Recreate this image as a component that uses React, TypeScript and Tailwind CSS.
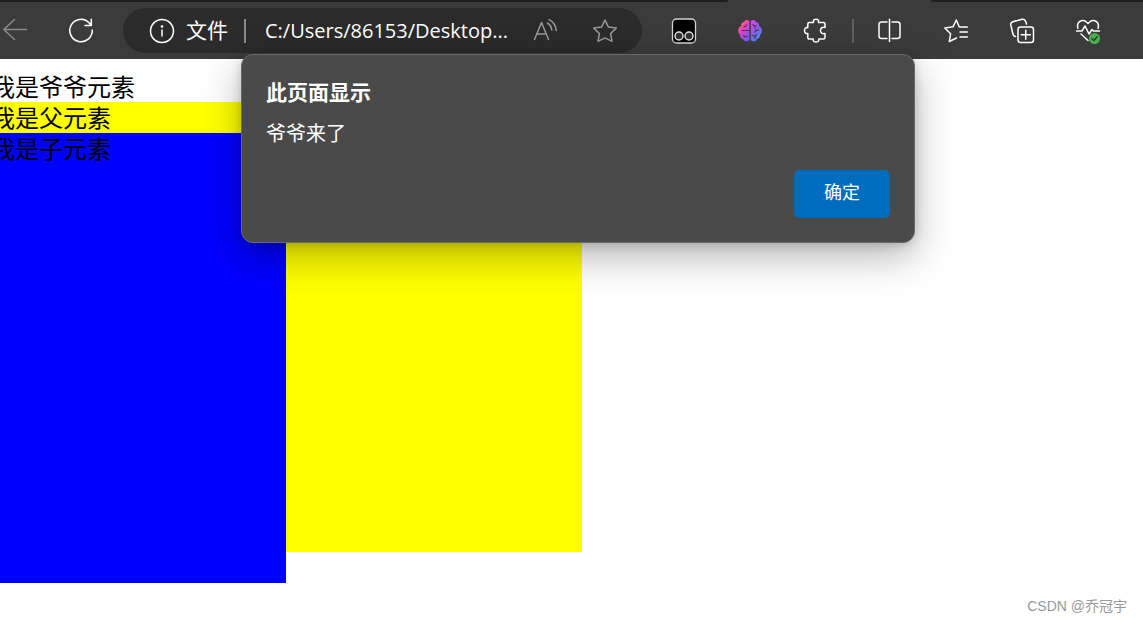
import type { ReactNode } from 'react'

function Icon({ children, className = 'text-white' }: { children: ReactNode; className?: string }) {
  return (
    <svg
      viewBox="0 0 24 24"
      className={`block w-6 h-6 overflow-visible ${className}`}
      fill="none"
      stroke="currentColor"
      strokeWidth="1.5"
      strokeLinecap="round"
      strokeLinejoin="round"
      aria-hidden="true"
    >
      {children}
    </svg>
  )
}

function ToolButton({ label, children }: { label: string; children: ReactNode }) {
  return (
    <button type="button" aria-label={label} className="w-6 h-6 shrink-0">
      {children}
    </button>
  )
}

function BrainIcon() {
  return (
    <svg viewBox="0 0 24 24" className="block w-6 h-6" aria-hidden="true">
      <defs>
        <linearGradient id="brainLeft" x1="0.2" y1="0" x2="0.8" y2="1">
          <stop offset="0" stopColor="#ff9a2e" />
          <stop offset="0.35" stopColor="#f43fc0" />
          <stop offset="1" stopColor="#6a5cff" />
        </linearGradient>
        <linearGradient id="brainRight" x1="0.2" y1="0" x2="0.8" y2="1">
          <stop offset="0" stopColor="#d946ef" />
          <stop offset="0.5" stopColor="#8b5cf6" />
          <stop offset="1" stopColor="#2ea0ff" />
        </linearGradient>
      </defs>
      <path
        fill="url(#brainLeft)"
        d="M11.4 2.2C10 .4 7 .8 6.300 3C4.200 3.200 2.800 5 3.200 7C.8 8 0 9.800 .3 12C.3 13.800 .8 15 2 15.800C1.700 18 3 19.600 5 20C6 22.400 9.600 23.200 11.400 21Z"
      />
      <path
        fill="url(#brainRight)"
        d="M12.800 2.200C14.200 .4 17 .8 17.800 3C20 3.200 21.400 5 21 7C23.300 8 24 9.800 23.800 12C23.800 13.800 23.200 15 22 15.800C22.400 18 21 19.600 19 20C18 22.400 14.600 23.200 12.800 21Z"
      />
      <g fill="none" stroke="#3b3b3b" strokeWidth="1.100">
        <path d="M3.500 11.500H11.500M5.500 7.500C7 8 8.500 7 8.500 5.500M5.500 16C6 18 8 18.500 9.500 17" />
        <path d="M15 5C15 7 17 7.500 18.500 6.500M17 7V9.500M21 11C18 10.500 17 12 17 13.500M14.500 16L17 17.500L19 15M17 17.500V20" />
      </g>
    </svg>
  )
}

function MonkeyIcon() {
  return (
    <svg viewBox="0 0 24 24" className="block w-6 h-6 overflow-visible" aria-hidden="true">
      <rect x="0.500" y="0" width="23" height="24" rx="4" fill="#000" stroke="#d4d4d4" strokeWidth="1.300" />
      <circle cx="7" cy="17" r="4" fill="#333" stroke="#e6e6e6" strokeWidth="1.400" />
      <circle cx="17" cy="17" r="4" fill="#333" stroke="#e6e6e6" strokeWidth="1.400" />
    </svg>
  )
}

function AddressBar() {
  return (
    <div className="flex flex-1 min-w-0 h-[45px] items-center rounded-full bg-[#2b2b2b] pl-[27px] pr-[25px]">
      <button type="button" className="flex shrink-0 items-center gap-3 text-[21px] text-white">
        <Icon>
          <circle cx="12" cy="12" r="11.500" />
          <path d="M12 11V17" />
          <circle cx="12" cy="7.500" r="0.600" fill="currentColor" />
        </Icon>
        文件
      </button>
      <div className="w-[2px] h-6 ml-4 mr-[19px] shrink-0 bg-[#8a8a8a]" />
      <input
        type="text"
        readOnly
        aria-label="地址栏"
        defaultValue="C:/Users/86153/Desktop..."
        className="flex-1 min-w-0 bg-transparent text-xl text-white outline-none"
      />
      <div className="flex shrink-0 gap-9">
        <ToolButton label="大声朗读">
          <Icon className="text-[#999999]">
            <path d="M1.500 20.500L8.500 3.500L15.500 20.500M4 15H13M14.500 4C17 5.500 18.500 8 18.800 11M16 .7C20 2.700 22.800 6.500 23.200 11.500" />
          </Icon>
        </ToolButton>
        <ToolButton label="收藏">
          <Icon className="text-[#999999]">
            <path d="M12 1L15.400 8L23.300 9.100L17.600 14.500L19 22.300L12 18.800L5 22.300L6.400 14.500L.7 9.100L8.600 8Z" />
          </Icon>
        </ToolButton>
      </div>
    </div>
  )
}

function Toolbar() {
  return (
    <header className="bg-[#3b3b3b]">
      {/* bottom edge of the tab strip, open under the active tab */}
      <div className="flex h-[2px]">
        <div className="flex-1 rounded-br-full bg-[#1f1f1f]" />
        <div className="w-[203px]" />
        <div className="w-[212px] rounded-bl-full bg-[#1f1f1f]" />
      </div>
      <div className="flex items-center h-[57px] pl-[3px] pr-[43px]">
        <ToolButton label="后退">
          <Icon className="text-[#8b8b8b]">
            <path d="M11.500 .5L.8 10.500L11.500 20.500M.8 10.500H23.500" />
          </Icon>
        </ToolButton>
        <div className="w-[42px] shrink-0" />
        <ToolButton label="刷新">
          <Icon>
            <path d="M23.200 11A11.200 11.200 0 1 1 19.800 3.500L22 6M22.300 .3V6.500H16" />
          </Icon>
        </ToolButton>
        <div className="w-[30px] shrink-0" />
        <AddressBar />
        <div className="flex shrink-0 gap-[42px] pl-[30px]">
          <ToolButton label="脚本管理器">
            <MonkeyIcon />
          </ToolButton>
          <ToolButton label="智能助手">
            <BrainIcon />
          </ToolButton>
          <ToolButton label="扩展">
            <Icon>
              <path d="M3.800 5C3.800 4 4.300 3.500 5.300 3.500H9.500C9 1.300 10 .2 12 .2C14 .2 15 1.300 14.500 3.500H19.500C20.500 3.500 21 4 21 5V8.500C18 7.900 16.500 9.300 16.500 11.500C16.500 13.700 18 15.100 21 14.500V18.500C21 19.500 20.500 20 19.500 20H14.800C15.200 22 14 23 12 23C10 23 8.800 22 9.200 20H5.300C4.300 20 3.800 19.500 3.800 18.500V14.500C1.500 14.900 .5 13.500 .5 11.500C.5 9.500 1.500 8.300 3.800 8.700Z" />
            </Icon>
          </ToolButton>
        </div>
        <div className="w-[2px] h-6 mx-6 shrink-0 bg-[#606060]" />
        <div className="flex shrink-0 gap-[42px]">
          <ToolButton label="分屏">
            <Icon>
              <path d="M9 3H3.500C2 3 1 4 1 5.500V17C1 18.500 2 19.500 3.500 19.500H9M14 3H19.500C21 3 22 4 22 5.500V17C22 18.500 21 19.500 19.500 19.500H14M11.500 .2V22.500" />
            </Icon>
          </ToolButton>
          <ToolButton label="收藏夹">
            <Icon>
              <path d="M23.300 8H15.300L12.300 1L9 7.800L.8 9L6.600 14.700L5.300 22.500L12.500 19M16 13H23.300M16 18H23.300" />
            </Icon>
          </ToolButton>
          <ToolButton label="集锦">
            <Icon>
              <path d="M5.500 17.500C4 17.300 3.300 16.500 3 15.300L.8 6C.4 4.500 1.200 3.300 2.700 2.800L12 .3C13.800 -.1 15 .5 15.600 2.300L16.500 5" />
              <rect x="8" y="8" width="15.500" height="15.500" rx="2.500" />
              <path d="M15.750 11.200V20.300M11.200 15.750H20.300" />
            </Icon>
          </ToolButton>
          <ToolButton label="浏览器概要">
            <Icon>
              <path d="M2 9.300C0 3.500 5.500 -.3 10 2.700L12 4.500L14 2.700C18.500 -.3 24 3.500 22 9.300M.5 12H6L9 7L13 15L16 10.500L17.500 12H23.500M5 15L12 21.500" />
              <circle cx="18.500" cy="19.500" r="5.500" fill="#4caf50" stroke="none" />
              <path d="M16 19.800L17.800 21.500L21.200 17.800" stroke="#24422a" />
            </Icon>
          </ToolButton>
        </div>
      </div>
    </header>
  )
}

function AlertDialog() {
  return (
    <div
      role="alertdialog"
      aria-labelledby="alert-title"
      aria-describedby="alert-text"
      className="absolute left-[241px] top-[54px] w-[674px] rounded-xl border border-[#6a6a6a] bg-[#4a4a4a] px-6 pt-[23px] pb-6 text-white shadow-[0_13px_38px_rgba(0,0,0,0.3),0_2px_10px_rgba(0,0,0,0.15)]"
    >
      <h1 id="alert-title" className="text-[21px] leading-7 font-bold">此页面显示</h1>
      <p id="alert-text" className="mt-3 text-xl leading-8">爷爷来了</p>
      <div className="mt-5 flex justify-end">
        <button type="button" className="w-24 h-12 rounded-md bg-[#006cbe] pb-1 text-lg">
          确定
        </button>
      </div>
    </div>
  )
}

export default function App() {
  return (
    <div className="relative flex flex-col min-h-screen overflow-hidden bg-white font-['Open_Sans','Noto_Sans_CJK_SC',sans-serif]">
      <Toolbar />

      {/* Nested demo boxes */}
      <main className="flex-1 -ml-[9px] pt-3 text-2xl leading-[31px] text-black">
        <div>
          我是爷爷元素
          <div className="w-[591px] h-[450px] bg-[#ffff00]">
            我是父元素
            <div className="w-[295px] h-[450px] bg-[#0000ff]">我是子元素</div>
          </div>
        </div>
      </main>

      <AlertDialog />

      <div className="absolute right-4 bottom-2 text-sm text-[#999999] font-['Liberation_Sans','Noto_Sans_CJK_SC',sans-serif]">
        CSDN @乔冠宇
      </div>
    </div>
  )
}
